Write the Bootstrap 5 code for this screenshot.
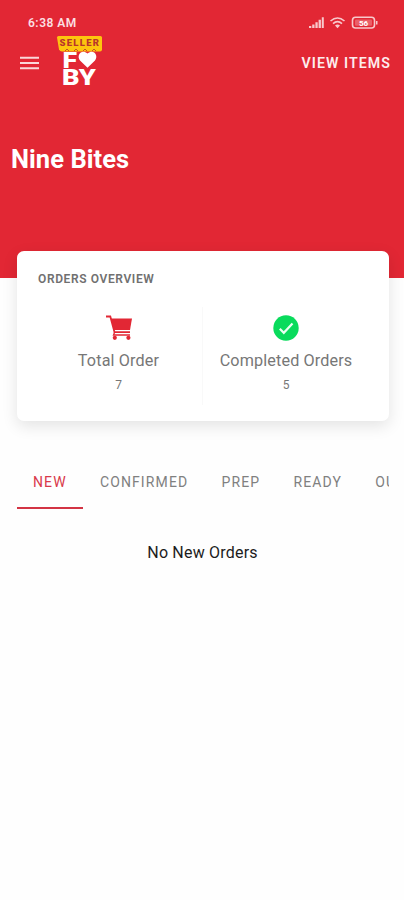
<!DOCTYPE html>
<html lang="en">
<head>
<meta charset="utf-8">
<meta name="viewport" content="width=device-width, initial-scale=1">
<title>Seller dashboard</title>
<link href="https://cdn.jsdelivr.net/npm/bootstrap@5.3.0/dist/css/bootstrap.min.css" rel="stylesheet">
<style>
body{font-family:Roboto,"Liberation Sans",sans-serif;background:#fefefe;color:#1c1c1c;min-height:900px;overflow-x:hidden}
.hero{background:#e22734;height:278px}
.status{height:36px;padding:10px 26px 0 28px}
.clock{font-size:12px;font-weight:600;line-height:27px;letter-spacing:.5px;color:#fbdfe1}
.appbar{height:54px;padding:0 13px 0 20px}
.logo-wrap{margin-left:15px;margin-top:-2px}
.view-items{font-size:14.2px;font-weight:600;letter-spacing:1.05px;line-height:20px;margin:0;color:#fdeced}
.shop{font-size:25.5px;font-weight:700;line-height:30px;padding:54px 11px 0;margin:0;letter-spacing:.05px}
.overview{margin:-27px 15px 0 17px;height:170px;border-radius:7px;box-shadow:0 5px 16px rgba(0,0,0,.11)}
.overview-title{font-size:12px;font-weight:600;line-height:16px;letter-spacing:.62px;color:#707070;padding:20px 21px 0;margin:0}
.stats{padding:20px 20px 0 18px}
.stat{height:98px;padding-top:8px}
.stat+.stat{border-left:1px solid #f9f9f9}
.stat-label{font-size:16.2px;line-height:20px;margin-top:10px;letter-spacing:.13px;color:#777;white-space:nowrap}
.stat-count{font-size:12px;line-height:16px;margin-top:6px;color:#777}
.order-tabs{margin:35px 15px 0 17px;height:53px;overflow:hidden}
.order-tabs .nav-link{font-size:14px;line-height:20px;letter-spacing:1.12px;padding:16px 16.6px 15px 16.6px;color:#808080;border-bottom:2px solid transparent;white-space:nowrap}
.order-tabs .nav-link.active{color:#d9394a;border-color:#d33444;padding-left:16px}
.empty-note{font-size:16px;line-height:20px;letter-spacing:.2px;margin:34px 0 0 1px}
</style>
<script src="https://cdn.jsdelivr.net/npm/bootstrap@5.3.0/dist/js/bootstrap.bundle.min.js"></script>
</head>
<body>
<header class="hero text-white">
  <div class="status d-flex justify-content-between">
    <span class="clock">6:38 AM</span>
    <svg width="70" height="26" viewBox="308 10 70 26" fill="#f8c9cc">
      <path d="M309 26h2.300v2H309zM312.200 24.500h2.300V28h-2.300zM315.400 22.300h2.300V28h-2.300zM318.600 19.800h2.300V28h-2.300zM321.800 17.200h2V28h-2z"/>
      <g fill="none" stroke="#f8c9cc" stroke-width="1.600"><path d="M330.500 21q7-6 14 0M333 23.700q4.500-4 9 0"/><rect x="352.500" y="17.200" width="22" height="10.800" rx="3"/></g>
      <path d="M335 25.500q2.500-2 5 0l-2.500 2.800zM376 21h1.500v3.500H376z"/><rect x="355" y="19.500" width="17" height="6.200" rx="1" opacity=".35"/>
      <text x="363.500" y="25.700" font-size="8" font-weight="700" text-anchor="middle" fill="#fff">56</text>
    </svg>
  </div>
  <div class="appbar d-flex align-items-center">
    <svg width="20" height="16" viewBox="0 0 20 16" aria-label="Menu"><path d="M0 2.700h19M0 8h19M0 13.300h19" stroke="#fad7d9" stroke-width="2"/></svg>
    <svg class="logo-wrap" width="48" height="54" viewBox="55 35 48 54" font-family="Roboto" font-weight="900">
      <path d="M58.500 36h42q1.500 0 1.500 1.500v12q0 2-2 2h-38q-2 0-3-2l-2-12q0-1.500 1.500-1.500z" fill="#fdc50e"/>
      <text x="59.500" y="46" font-size="9.500" textLength="39.500" fill="#b8352b">SELLER</text>
      <path d="M65 51l2-2 2 2M74 51l2-2 2 2M83 51l2-2 2 2M92 51l2-2 2 2" stroke="#c65224" fill="none"/>
      <g fill="#fff"><text x="62.500" y="67.500" font-size="22" textLength="14.500" lengthAdjust="spacingAndGlyphs">F</text>
      <text x="62" y="84.800" font-size="22" textLength="34" lengthAdjust="spacingAndGlyphs">BY</text>
      <path d="M87.500 67.800l-7.500-7.300c-4-5 1.500-12 7.500-7 6-5 11.500 2 7.500 7z"/></g>
    </svg>
    <a class="view-items ms-auto text-decoration-none" href="#">VIEW ITEMS</a>
  </div>
  <h1 class="shop">Nine Bites</h1>
</header>
<main>
  <section class="overview card border-0">
    <h2 class="overview-title">ORDERS OVERVIEW</h2>
    <div class="stats d-flex">
      <div class="stat w-50 text-center d-flex flex-column align-items-center">
        <svg width="28" height="26" viewBox="0 0 28 26"><path d="M1 1.500h4.300l4.200 15.700H25" fill="none" stroke="#e22734" stroke-width="1.800"/><path d="M6 3.500h21l-2 11.500H9z" fill="#e22734"/><path d="M9.500 17.500l-1 2.500H25" fill="none" stroke="#e22734" stroke-width="1.300"/><circle cx="9.800" cy="22.800" r="2.100" fill="#e22734"/><circle cx="23.400" cy="22.800" r="2.100" fill="#e22734"/></svg>
        <div class="stat-label">Total Order</div>
        <div class="stat-count">7</div>
      </div>
      <div class="stat w-50 text-center d-flex flex-column align-items-center">
        <svg width="26" height="26" viewBox="0 0 26 26"><circle cx="13" cy="13" r="12.700" fill="#09db5c"/><path d="M6.800 13.800l4 4L19.500 8.500" fill="none" stroke="#e9fff1" stroke-width="2.200"/></svg>
        <div class="stat-label">Completed Orders</div>
        <div class="stat-count">5</div>
      </div>
    </div>
  </section>
  <nav class="order-tabs nav flex-nowrap">
    <a class="nav-link active" href="#">NEW</a>
    <a class="nav-link" href="#">CONFIRMED</a>
    <a class="nav-link" href="#">PREP</a>
    <a class="nav-link" href="#">READY</a>
    <a class="nav-link" href="#">OUT</a>
  </nav>
  <p class="empty-note text-center">No New Orders</p>
</main>
</body>
</html>
